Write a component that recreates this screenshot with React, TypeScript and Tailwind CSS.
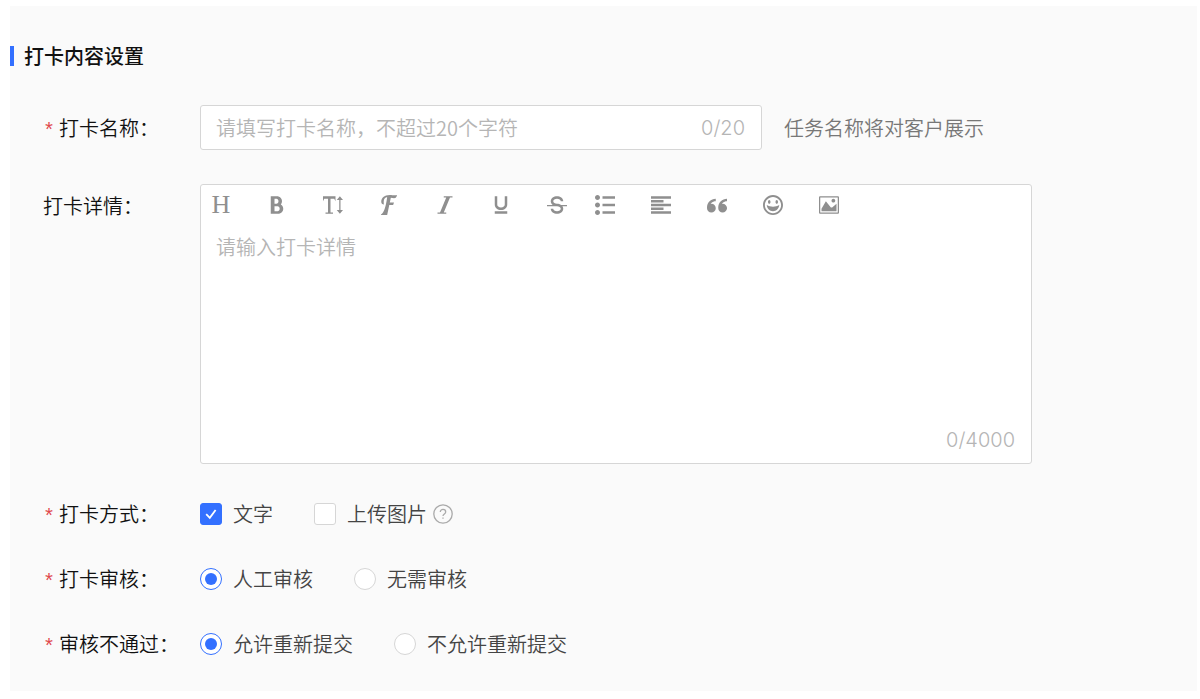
import { useState, type ReactNode } from "react";
import {
  ImBold,
  ImFont,
  ImHappy,
  ImImage,
  ImItalic,
  ImList2,
  ImParagraphLeft,
  ImQuotesLeft,
  ImStrikethrough,
  ImTextHeight,
  ImUnderline,
} from "react-icons/im";

const NAME_MAX = 20;
const DETAIL_MAX = 4000;

const textTools = [
  { label: "标题", icon: <span className="font-['Liberation_Serif',serif] text-[26px] leading-5">H</span> },
  { label: "加粗", icon: <ImBold /> },
  { label: "字号", icon: <ImTextHeight /> },
  { label: "字体", icon: <ImFont /> },
  { label: "斜体", icon: <ImItalic /> },
  { label: "下划线", icon: <ImUnderline /> },
  { label: "删除线", icon: <ImStrikethrough /> },
];

const blockTools = [
  { label: "列表", icon: <ImList2 /> },
  { label: "对齐", icon: <ImParagraphLeft /> },
  { label: "引用", icon: <ImQuotesLeft /> },
  { label: "表情", icon: <ImHappy /> },
  { label: "图片", icon: <ImImage /> },
];

function ToolGroup({ tools }: { tools: { label: string; icon: ReactNode }[] }) {
  return (
    <div className="flex gap-9">
      {tools.map((t) => (
        <button
          key={t.label}
          type="button"
          aria-label={t.label}
          className="flex size-5 items-center justify-center text-xl text-[#8f8f8f] hover:text-[#333333]"
        >
          {t.icon}
        </button>
      ))}
    </div>
  );
}

function RowLabel({ text, required, htmlFor }: { text: string; required?: boolean; htmlFor?: string }) {
  const content = (
    <>
      {required && (
        <span className="w-4 pt-2 font-['Liberation_Mono',monospace] leading-5 text-[#e0484d]">*</span>
      )}
      {text}：
    </>
  );
  const cls = "flex w-[157px] shrink-0 items-center whitespace-nowrap text-[#111111]";
  return htmlFor ? (
    <label htmlFor={htmlFor} className={cls}>
      {content}
    </label>
  ) : (
    <span className={cls}>{content}</span>
  );
}

function Checkbox({ label, defaultChecked }: { label: string; defaultChecked?: boolean }) {
  return (
    <label className="flex items-center gap-[11px]">
      <span className="grid size-[22px] place-items-center">
        <input
          type="checkbox"
          defaultChecked={defaultChecked}
          className="peer col-start-1 row-start-1 size-[22px] appearance-none rounded-[3px] border border-[#d6d6d6] bg-white checked:border-[#3370ff] checked:bg-[#3370ff]"
        />
        <svg
          viewBox="0 0 22 22"
          fill="none"
          stroke="currentColor"
          strokeWidth="1.8"
          className="pointer-events-none invisible col-start-1 row-start-1 size-[22px] text-white peer-checked:visible"
        >
          <path d="M6.2 11.2l3.6 3.6 5.8-7.8" />
        </svg>
      </span>
      {label}
    </label>
  );
}

function Radio({ name, label, defaultChecked }: { name: string; label: string; defaultChecked?: boolean }) {
  return (
    <label className="flex items-center gap-[11px]">
      <span className="grid size-[22px] place-items-center">
        <input
          type="radio"
          name={name}
          defaultChecked={defaultChecked}
          className="peer col-start-1 row-start-1 size-[22px] appearance-none rounded-full border border-[#d6d6d6] bg-white checked:border-[#3370ff]"
        />
        <span className="pointer-events-none invisible col-start-1 row-start-1 size-3 rounded-full bg-[#3370ff] peer-checked:visible" />
      </span>
      {label}
    </label>
  );
}

function OptionRow({ label, children }: { label: string; children: ReactNode }) {
  return (
    <div role="group" aria-label={label} className="flex min-h-[31px] items-center">
      <RowLabel text={label} required />
      <div className="flex flex-wrap gap-x-[41px] text-[#444444]">{children}</div>
    </div>
  );
}

export default function App() {
  const [name, setName] = useState("");
  const [detail, setDetail] = useState("");

  return (
    <main className="min-h-screen bg-white pt-1.5 pr-[3px] pb-2 pl-2.5 font-['Noto_Sans_CJK_SC',sans-serif] text-xl leading-7 font-[350]">
      <form className="bg-[#fafafa] pt-9 pb-8">
        <h2 className="flex items-center gap-2.5 font-medium text-[#111111]">
          <span className="h-5 w-1 bg-[#3370ff]" />
          打卡内容设置
        </h2>

        <div className="mt-[35px] flex flex-col gap-[34px] pl-[33px]">
          <div className="flex items-center">
            <RowLabel text="打卡名称" required htmlFor="task-name" />
            <div className="flex h-[45px] w-full max-w-[562px] items-center rounded-[3px] border border-[#d6d6d6] bg-white pr-4 pl-[15px]">
              <input
                id="task-name"
                value={name}
                maxLength={NAME_MAX}
                onChange={(e) => setName(e.target.value)}
                placeholder="请填写打卡名称，不超过20个字符"
                className="min-w-0 flex-1 bg-transparent outline-none placeholder:text-[#b5b5b5]"
              />
              <span className="font-['Inter',sans-serif] font-light text-[#b5b5b5]">
                {name.length}/{NAME_MAX}
              </span>
            </div>
            <span className="ml-[22px] shrink-0 text-[#777777]">任务名称将对客户展示</span>
          </div>

          <div className="flex items-start">
            <div className="flex h-11 shrink-0 items-center">
              <RowLabel text="打卡详情" htmlFor="task-detail" />
            </div>
            <div className="flex h-[280px] w-full max-w-[832px] flex-col rounded-[3px] border border-[#d6d6d6] bg-white">
              <div className="flex h-10 shrink-0 items-center gap-7 px-2.5">
                <ToolGroup tools={textTools} />
                <ToolGroup tools={blockTools} />
              </div>
              <textarea
                id="task-detail"
                value={detail}
                maxLength={DETAIL_MAX}
                onChange={(e) => setDetail(e.target.value)}
                placeholder="请输入打卡详情"
                className="w-full flex-1 resize-none bg-transparent px-[15px] pt-2 outline-none placeholder:text-[#b5b5b5]"
              />
              <div className="px-4 pb-[9px] text-right font-['Inter',sans-serif] font-light text-[#b5b5b5]">
                {detail.length}/{DETAIL_MAX}
              </div>
            </div>
          </div>

          <OptionRow label="打卡方式">
            <Checkbox label="文字" defaultChecked />
            <div className="flex items-center gap-1.5">
              <Checkbox label="上传图片" />
              <button type="button" aria-label="帮助" className="text-[#aaaaaa]">
                <svg viewBox="0 0 20 20" fill="none" stroke="currentColor" strokeWidth="1.3" className="size-5">
                  <circle cx="10" cy="10" r="9.2" />
                  <path d="M7.3 8.1c0-1.6 1.1-2.7 2.7-2.7s2.7 1 2.7 2.5c0 2-2.7 2.1-2.7 4.2" />
                  <path d="M10 13.4v1.4" />
                </svg>
              </button>
            </div>
          </OptionRow>

          <OptionRow label="打卡审核">
            <Radio name="review" label="人工审核" defaultChecked />
            <Radio name="review" label="无需审核" />
          </OptionRow>

          <OptionRow label="审核不通过">
            <Radio name="rejected" label="允许重新提交" defaultChecked />
            <Radio name="rejected" label="不允许重新提交" />
          </OptionRow>
        </div>
      </form>
    </main>
  );
}
